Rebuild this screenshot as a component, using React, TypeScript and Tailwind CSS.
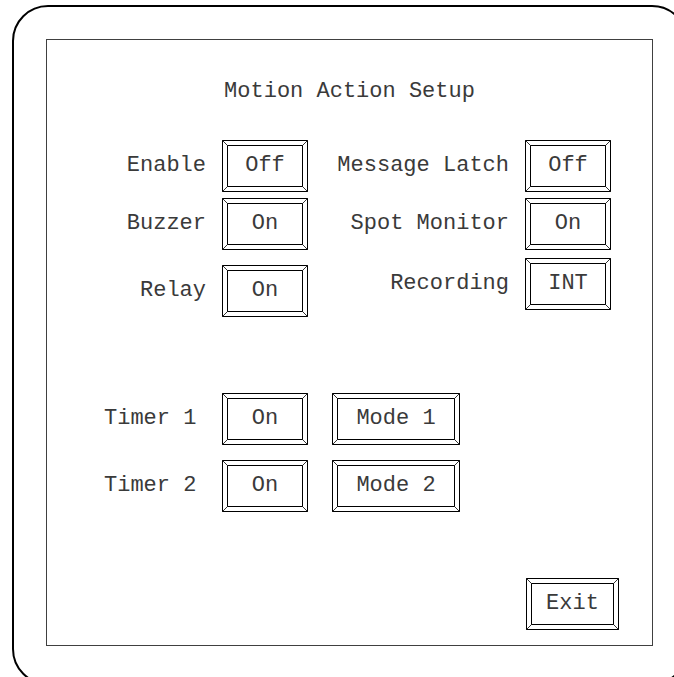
import type { ReactNode } from "react"

type BevelProps = {
  w: number
  h: number
  className: string
  children: ReactNode
}

// raised panel button: outer frame, 5px bevel, inner frame
function BevelButton({ w, h, className, children }: BevelProps) {
  const b = 5
  return (
    <div className={`relative flex shrink-0 items-center justify-center ${className}`}>
      <svg className="absolute inset-0" width={w} height={h} viewBox={`0 0 ${w} ${h}`}>
        <rect x={0.5} y={0.5} width={w - 1} height={h - 1} fill="#fff" stroke="#000" />
        <rect x={b + 0.5} y={b + 0.5} width={w - 2 * b - 1} height={h - 2 * b - 1} fill="#fff" stroke="#000" />
        <line x1={0.5} y1={0.5} x2={b + 0.5} y2={b + 0.5} stroke="#333" />
        <line x1={w - 0.5} y1={0.5} x2={w - b - 0.5} y2={b + 0.5} stroke="#333" />
        <line x1={0.5} y1={h - 0.5} x2={b + 0.5} y2={h - b - 0.5} stroke="#333" />
        <line x1={w - 0.5} y1={h - 0.5} x2={w - b - 0.5} y2={h - b - 0.5} stroke="#333" />
      </svg>
      <span className="relative">{children}</span>
    </div>
  )
}

function Toggle({ children }: { children: ReactNode }) {
  return (
    <BevelButton w={86} h={52} className="w-[86px] h-[52px]">
      {children}
    </BevelButton>
  )
}

export default function App() {
  return (
    <div
      className="w-[674px] h-[677px] overflow-hidden bg-white pl-[12px] pt-[5px] text-[22px] leading-[24px] text-[#3a3a3a]"
      style={{ fontFamily: '"Courier New", "Nimbus Mono PS", "Nimbus Mono L", FreeMono, "Liberation Mono", monospace' }}
    >
      <div className="w-[676px] h-[680px] rounded-[36px] border-2 border-black p-[32px]">
        <div className="w-[607px] h-[607px] border border-[#404040] flex flex-col">

          {/* Title */}
          <div className="pt-[40px] text-center">Motion Action Setup</div>

          {/* Toggles */}
          <div className="mt-[36px] flex">
            <div className="flex flex-col">
              <div className="flex items-center gap-[16px]">
                <div className="w-[159px] text-right">Enable</div>
                <Toggle>Off</Toggle>
              </div>
              <div className="mt-[6px] flex items-center gap-[16px]">
                <div className="w-[159px] text-right">Buzzer</div>
                <Toggle>On</Toggle>
              </div>
              <div className="mt-[15px] flex items-center gap-[16px]">
                <div className="w-[159px] text-right">Relay</div>
                <Toggle>On</Toggle>
              </div>
            </div>

            <div className="flex flex-col">
              <div className="flex items-center gap-[16px]">
                <div className="w-[201px] text-right">Message Latch</div>
                <Toggle>Off</Toggle>
              </div>
              <div className="mt-[6px] flex items-center gap-[16px]">
                <div className="w-[201px] text-right">Spot Monitor</div>
                <Toggle>On</Toggle>
              </div>
              <div className="mt-[8px] flex items-center gap-[16px]">
                <div className="w-[201px] text-right">Recording</div>
                <Toggle>INT</Toggle>
              </div>
            </div>
          </div>

          {/* Timers */}
          <div className="mt-[76px] pl-[57px] flex flex-col gap-[15px]">
            <div className="flex items-center">
              <div className="w-[118px]">Timer 1</div>
              <Toggle>On</Toggle>
              <div className="ml-[24px]">
                <BevelButton w={128} h={52} className="w-[128px] h-[52px]">Mode 1</BevelButton>
              </div>
            </div>
            <div className="flex items-center">
              <div className="w-[118px]">Timer 2</div>
              <Toggle>On</Toggle>
              <div className="ml-[24px]">
                <BevelButton w={128} h={52} className="w-[128px] h-[52px]">Mode 2</BevelButton>
              </div>
            </div>
          </div>

          {/* Exit */}
          <div className="mt-[66px] flex justify-end pr-[33px]">
            <BevelButton w={93} h={52} className="w-[93px] h-[52px]">Exit</BevelButton>
          </div>
        </div>
      </div>
    </div>
  )
}
